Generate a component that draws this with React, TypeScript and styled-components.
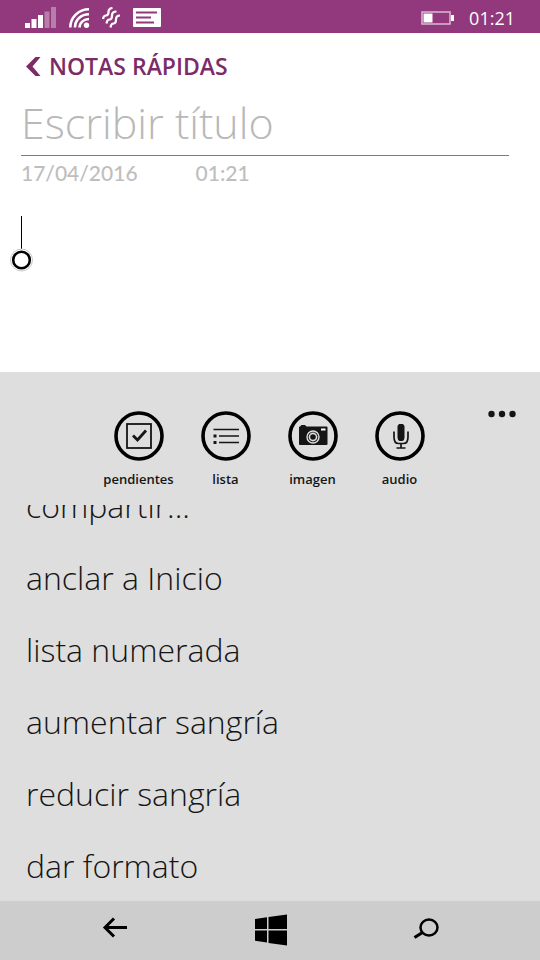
import React from "react";
import styled, { createGlobalStyle } from "styled-components";

const GlobalStyle = createGlobalStyle`
  *, *::before, *::after { box-sizing: border-box; }
  body { margin: 0; background: #fff; }
  button, input, textarea { font: inherit; color: inherit; }
`;

const UI_FONT = '"Open Sans", "Noto Sans", sans-serif';
const NOTE_FONT = 'Lato, "Open Sans", sans-serif';

const Page = styled.div`
  display: flex;
  flex-direction: column;
  min-height: 100vh;
  background: #fff;
  color: #151515;
  font-family: ${UI_FONT};
`;

const StatusBar = styled.header`
  display: flex;
  align-items: center;
  justify-content: space-between;
  height: 33px;
  padding: 2px 25px 0;
  background: #92387c;
  color: #fff;
`;

const StatusGroup = styled.div<{ $gap: number }>`
  display: flex;
  align-items: center;
  gap: ${(p) => p.$gap}px;

  svg { display: block; }
`;

const Clock = styled.time`
  font-size: 18px;
  line-height: 28px;
  font-weight: 400;
`;

const Note = styled.main`
  display: flex;
  flex: 1;
  flex-direction: column;
  padding: 16px 31px 0 21px;
`;

const SectionButton = styled.button`
  display: flex;
  align-items: center;
  align-self: flex-start;
  gap: 8px;
  padding: 0 5px;
  border: 0;
  background: none;
  color: #7b2c68;
  font-size: 23px;
  line-height: 34px;
  font-weight: 600;

  svg { display: block; }
`;

const TitleInput = styled.input`
  width: 100%;
  height: 73px;
  padding: 6px 0 0;
  border: 0;
  border-bottom: 1px solid #7d7d7d;
  border-radius: 0;
  outline: 0;
  background: none;
  font-family: ${UI_FONT};
  font-size: 43px;
  font-weight: 300;

  &::placeholder { color: #b8b8b8; opacity: 1; }
`;

const Stamp = styled.div`
  display: flex;
  gap: 58px;
  color: #bebebe;
  font-family: ${NOTE_FONT};
  font-size: 21px;
  line-height: 34px;
  font-weight: 500;
`;

const Editor = styled.div`
  position: relative;
  flex: 1;
  margin-top: 26px;
`;

const BodyText = styled.textarea`
  display: block;
  width: 100%;
  height: 100%;
  padding: 0;
  border: 0;
  outline: 0;
  resize: none;
  background: none;
  font-family: ${NOTE_FONT};
  font-size: 24px;
  line-height: 32px;
`;

const Caret = styled.svg`
  position: absolute;
  top: 0;
  left: -12px;
  pointer-events: none;
`;

const AppBar = styled.section`
  background: #dedede;
`;

const Commands = styled.div`
  display: grid;
  grid-template-columns: 1fr auto 1fr;
  align-items: start;
  height: 133px;
  padding: 36px 18px 0 16px;
`;

const CommandRow = styled.div`
  display: flex;
  grid-column: 2;
`;

const Command = styled.button`
  display: flex;
  flex-direction: column;
  align-items: center;
  width: 87px;
  padding: 3px 0 0;
  border: 0;
  background: none;
  font-size: 13px;
  line-height: 18px;
  font-weight: 600;

  svg { display: block; margin-bottom: 9px; }
`;

const MoreButton = styled.button`
  justify-self: end;
  padding: 0;
  border: 0;
  background: none;

  svg { display: block; }
`;

const Menu = styled.ul`
  display: flex;
  flex-direction: column;
  justify-content: flex-end;
  height: 396px;
  margin: 0;
  padding: 0;
  overflow: hidden;
  list-style: none;
`;

const MenuItem = styled.li`
  flex: none;
`;

const MenuButton = styled.button`
  display: block;
  width: 100%;
  height: 72px;
  padding: 2px 26px 0;
  border: 0;
  background: none;
  font-size: 32px;
  line-height: 44px;
  font-weight: 300;
  text-align: left;
`;

const NavBar = styled.nav`
  display: flex;
  align-items: center;
  justify-content: space-between;
  height: 59px;
  padding: 0 93px 1px 95px;
  background: #cdcdcd;
`;

const NavButton = styled.button`
  padding: 0;
  border: 0;
  background: none;

  svg { display: block; }
`;

const SignalIcon = () => (
  <svg width="32" height="21" viewBox="0 0 32 21" fill="#fff" aria-hidden="true">
    <rect x="0" y="16" width="5" height="5" />
    <rect x="6.500" y="12" width="5" height="9" />
    <rect x="13" y="8" width="5" height="13" />
    <rect x="19.500" y="4.500" width="5" height="16.500" opacity=".35" />
    <rect x="26" y="0" width="5" height="21" opacity=".35" />
  </svg>
);

const WifiIcon = () => (
  <svg width="21" height="21" viewBox="0 0 21 21" fill="none" stroke="#fff" strokeWidth="2.600" aria-hidden="true">
    <path d="M1.300 20.500C1.300 10.500 9.500 2.300 20 2.300M6 20.500C6 13 12 7.200 20 7.200M10.600 20.500C10.600 15.500 15 12 20 12" />
    <circle cx="17.500" cy="18.200" r="2.700" fill="#fff" stroke="none" />
  </svg>
);

const VibrateIcon = () => (
  <svg width="19" height="21" viewBox="0 0 19 21" fill="none" stroke="#fff" strokeWidth="2.200" aria-hidden="true">
    <path d="M1 12Q1.500 8.500 4 8.500T6.500 5T10.500 1" />
    <path d="M4.500 16.500Q5 12.500 7.500 12.500T10 8.500T14.500 4.500" />
    <path d="M8.500 20.500Q9 16.500 11.500 16.500T14 12.500T18 8.500" />
  </svg>
);

const MessageIcon = () => (
  <svg width="28" height="19" viewBox="0 0 28 19" aria-hidden="true">
    <rect width="28" height="19" rx="1" fill="#fff" />
    <path d="M3 4.500H24M3 9.500H18M3 14.500H21" stroke="#92387c" strokeWidth="2" />
  </svg>
);

const BatteryIcon = () => (
  <svg width="34" height="14" viewBox="0 0 34 14" aria-hidden="true">
    <rect x="1" y="1" width="28" height="12" fill="none" stroke="#dcb9d4" strokeWidth="1.500" />
    <rect x="2.500" y="2.500" width="9" height="9" fill="#fff" />
    <rect x="30" y="4" width="3" height="6" fill="#fff" />
  </svg>
);

const Ring = ({ children }: { children: React.ReactNode }) => (
  <svg width="50" height="50" viewBox="0 0 50 50" fill="none" stroke="#151515" aria-hidden="true">
    <circle cx="25" cy="25" r="23" stroke="#000" strokeWidth="3.600" />
    {children}
  </svg>
);

const commands = [
  {
    label: "pendientes",
    icon: (
      <>
        <rect x="13" y="13" width="24" height="24" strokeWidth="1.800" />
        <path d="M19 24.500L23.500 29L32 19.500" strokeWidth="2.800" />
      </>
    ),
  },
  {
    label: "lista",
    icon: (
      <>
        <path d="M12.500 18.500H38M18 25H38M18 31.500H38" strokeWidth="1.700" />
        <path d="M12.500 25H15.500M12.500 31.500H15.500" strokeWidth="3" />
      </>
    ),
  },
  {
    label: "imagen",
    icon: (
      <>
        <path d="M12 15.500L13.500 14H17L18.500 15.500H38.500Q39.500 15.500 39.500 16.500V33Q39.500 34 38.500 34H12Q11 34 11 33V16.500Q11 15.500 12 15.500Z" fill="#151515" stroke="none" />
        <circle cx="25" cy="26" r="6" stroke="#dedede" strokeWidth="1.400" />
        <circle cx="25" cy="26" r="3.600" stroke="#dedede" strokeWidth="1.600" />
        <path d="M33 18.500H37.500" stroke="#fff" strokeWidth="2" />
      </>
    ),
  },
  {
    label: "audio",
    icon: (
      <>
        <path d="M24 13H28L29.500 15V26.500Q29.500 29 27.500 30H24.500Q22.500 29 22.500 26.500V15Z" fill="#151515" stroke="none" />
        <path d="M19 20.500V26Q19 32.500 23.500 32.500H28.500Q33 32.500 33 26V20.500M26 32.500V37M21.500 37H30.500" strokeWidth="1.700" />
      </>
    ),
  },
];

const menuItems = [
  "compartir...",
  "anclar a Inicio",
  "lista numerada",
  "aumentar sangría",
  "reducir sangría",
  "dar formato",
];

export default function App() {
  return (
    <>
      <GlobalStyle />
      <Page lang="es">
        <StatusBar>
          <StatusGroup $gap={12}>
            <SignalIcon />
            <WifiIcon />
            <VibrateIcon />
            <MessageIcon />
          </StatusGroup>
          <StatusGroup $gap={14}>
            <BatteryIcon />
            <Clock>01:21</Clock>
          </StatusGroup>
        </StatusBar>

        <Note>
          <SectionButton type="button">
            <svg width="15" height="19" viewBox="0 0 15 19" fill="#7b2c68" aria-hidden="true">
              <path d="M9.500 0H14.500L6.500 9.500L14.500 19H9.500L0 9.500Z" />
            </svg>
            NOTAS RÁPIDAS
          </SectionButton>
          <TitleInput aria-label="Título" placeholder="Escribir título" />
          <Stamp>
            <time>17/04/2016</time>
            <time>01:21</time>
          </Stamp>
          <Editor>
            <BodyText aria-label="Nota" />
            <Caret width="24" height="56" viewBox="0 0 24 56" fill="none" aria-hidden="true">
              <path d="M12.500 0V33" stroke="#000" />
              <circle cx="12.500" cy="44" r="11" fill="#fff" stroke="#c8c8c8" />
              <circle cx="12.500" cy="44" r="8.300" stroke="#000" strokeWidth="2.600" />
            </Caret>
          </Editor>
        </Note>

        <AppBar>
          <Commands>
            <CommandRow>
              {commands.map((c) => (
                <Command key={c.label} type="button">
                  <Ring>{c.icon}</Ring>
                  {c.label}
                </Command>
              ))}
            </CommandRow>
            <MoreButton type="button" aria-label="Más">
              <svg width="40" height="12" viewBox="0 0 40 12" fill="#151515" aria-hidden="true">
                <circle cx="9.500" cy="6" r="3.200" />
                <circle cx="20" cy="6" r="3.200" />
                <circle cx="30.500" cy="6" r="3.200" />
              </svg>
            </MoreButton>
          </Commands>
          <Menu>
            {menuItems.map((label) => (
              <MenuItem key={label}>
                <MenuButton type="button">{label}</MenuButton>
              </MenuItem>
            ))}
          </Menu>
        </AppBar>

        <NavBar>
          <NavButton type="button" aria-label="Atrás">
            <svg width="40" height="32" viewBox="0 0 40 32" aria-hidden="true">
              <path d="M32 13.500H10.500M19 4.500L10 13.500L19 22.500" fill="none" stroke="#000" strokeWidth="3" />
            </svg>
          </NavButton>
          <NavButton type="button" aria-label="Inicio">
            <svg width="34" height="32" viewBox="0 0 34 32" aria-hidden="true">
              <path d="M1 5L13 3.200V15H1ZM14.500 3L33 .5V15H14.500ZM1 16.500H13V28.500L1 26.800ZM14.500 16.500H33V31.500L14.500 29Z" />
            </svg>
          </NavButton>
          <NavButton type="button" aria-label="Buscar">
            <svg width="40" height="32" viewBox="0 0 40 32" fill="none" stroke="#000" aria-hidden="true">
              <ellipse cx="22" cy="13.500" rx="8.500" ry="8" strokeWidth="2.500" />
              <path d="M15.500 18.500L7.500 23.500" strokeWidth="3.200" />
            </svg>
          </NavButton>
        </NavBar>
      </Page>
    </>
  );
}
